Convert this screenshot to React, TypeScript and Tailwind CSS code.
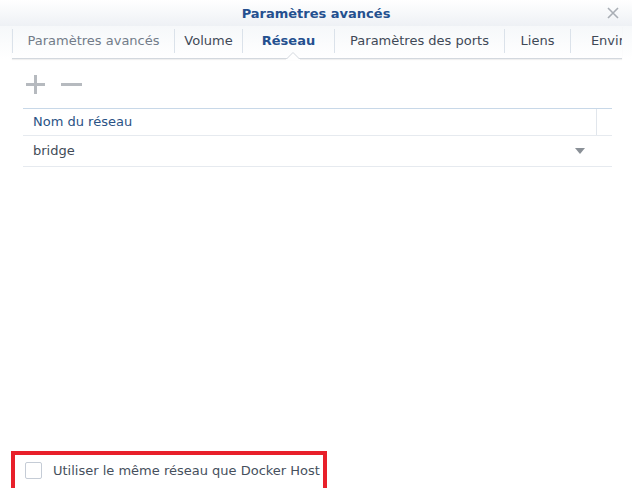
import React from "react";

const tabs = [
  { label: "Paramètres avancés", w: "w-[162px]", cls: "text-[#727c89]" },
  { label: "Volume", w: "w-[68px]", cls: "text-[#3f4957]" },
  { label: "Réseau", w: "w-[92px]", cls: "text-[#24508f] font-bold", active: true },
  { label: "Paramètres des ports", w: "w-[170px]", cls: "text-[#3f4957]" },
  { label: "Liens", w: "w-[66px]", cls: "text-[#3f4957]" },
  { label: "Environnement", w: "w-[140px]", cls: "text-[#3f4957]" },
];

const App = () => {
  return (
    <div className="w-[632px] h-[488px] bg-white flex flex-col overflow-hidden font-['DejaVu_Sans',Tahoma,sans-serif] text-[12px]">
      <div className="h-[26px] shrink-0 relative flex items-center justify-center bg-gradient-to-b from-white to-[#eef1f5]">
        <div className="text-[#24508f] text-[13px] font-bold pt-[1px]">Paramètres avancés</div>
        <svg className="absolute right-[13px] top-[7px]" width="12" height="12" viewBox="0 0 12 12">
          <path d="M1 1 L11 11 M11 1 L1 11" stroke="#a9aeb5" strokeWidth="1.6" />
        </svg>
      </div>

      <div className="shrink-0 bg-gradient-to-b from-[#f6f8fa] to-white">
        <div className="ml-[12px] mr-[10px] h-[33px] flex items-start border-b border-[#d3d8de] shadow-[0_1px_1px_rgba(0,0,0,0.06)] overflow-hidden relative">
          <div className="h-[24px] mt-[3px] w-px bg-[#dbe2ea] shrink-0" />
          {tabs.map((t) => (
            <div key={t.label} className={`${t.w} shrink-0 flex items-start h-full`}>
              <div className={`flex-1 h-[24px] mt-[3px] flex items-center justify-center text-[13px] whitespace-nowrap ${t.cls}`}>
                {t.label}
              </div>
              <div className="h-[24px] mt-[3px] w-px bg-[#dbe2ea] shrink-0" />
            </div>
          ))}
        </div>
      </div>
      <div className="relative h-0">
        <svg className="absolute left-[286px] top-[-7px]" width="14" height="8" viewBox="0 0 14 8">
          <path d="M0 7.5 L7 0.5 L14 7.5" fill="white" stroke="#d3d8de" strokeWidth="1" />
          <rect x="0" y="7" width="14" height="2" fill="white" />
        </svg>
      </div>

      <div className="flex-1 flex flex-col pl-[23px] pr-[20px]">
        <div className="h-[49px] flex items-center gap-[15px] pl-[2px] pt-[2px]">
          <svg width="21" height="21" viewBox="0 0 21 21">
            <path d="M10.5 1 V20 M1 10.5 H20" stroke="#b6babf" strokeWidth="3" />
          </svg>
          <svg width="21" height="21" viewBox="0 0 21 21">
            <path d="M0 10.5 H21" stroke="#b6babf" strokeWidth="3" />
          </svg>
        </div>

        <div className="flex h-[28px] border-t border-[#c8d8e8] border-b border-b-[#e6eaef]">
          <div className="flex-1 flex items-center pl-[10px] text-[13px] text-[#2a5285]">Nom du réseau</div>
          <div className="w-px bg-[#e1e6ec]" />
          <div className="w-[15px]" />
        </div>
        <div className="flex h-[31px] items-center border-b border-[#e6eaef] pl-[10px] pr-[27px]">
          <div className="flex-1 text-[13px] text-[#414b57]">bridge</div>
          <svg width="10" height="6" viewBox="0 0 10 6">
            <path d="M0 0 H10 L5 6 Z" fill="#8a9097" />
          </svg>
        </div>

        <div className="flex-1" />
      </div>

      <div className="shrink-0 ml-[11px] w-[316px] h-[37px] border-[4px] border-b-0 border-[#e8202a] flex items-center pl-[10px] pb-[2px]">
        <div className="w-[17px] h-[17px] border border-[#c5ccd6] rounded-[2px] bg-white shrink-0" />
        <div className="ml-[11px] text-[13px] text-[#46505d] whitespace-nowrap">Utiliser le même réseau que Docker Host</div>
      </div>
    </div>
  );
};

export default App;
